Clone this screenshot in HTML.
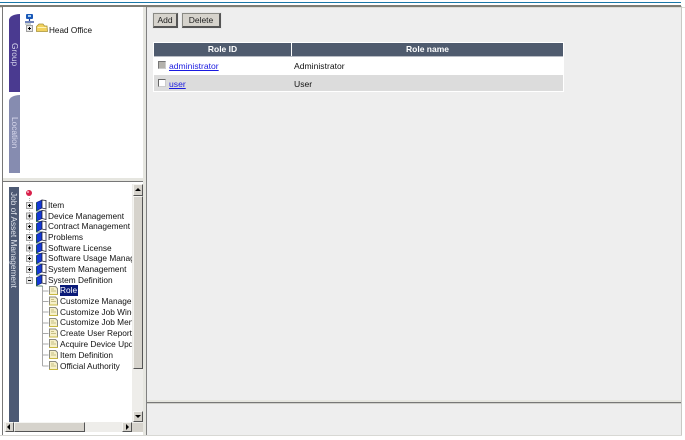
<!DOCTYPE html>
<html><head><meta charset="utf-8">
<style>
html,body{margin:0;padding:0;width:685px;height:440px;overflow:hidden;background:#fff}
body{position:relative;font-family:"Liberation Sans",sans-serif;font-size:8.3px;color:#111;filter:blur(.3px)}
.a{position:absolute}
.t{position:absolute;white-space:nowrap;line-height:11px;height:11px}
.v{position:absolute;writing-mode:vertical-rl;white-space:nowrap;font-size:8.3px}
.btn{position:absolute;background:#d6d3cc;border-style:solid;border-width:1px 2px 2px 1px;border-color:#8a8a84 #555 #555 #8a8a84;box-shadow:0 0 0 1px #e8e8e8;box-sizing:border-box;font-size:8.5px;text-align:center;line-height:13px;color:#222}
.sb{position:absolute;background:#d6d3cc;border:1px solid;border-color:#f5f5f2 #555 #555 #f5f5f2;box-sizing:border-box}
svg.i{position:absolute;overflow:visible}
</style></head><body>
<div class="a" style="left:0;top:2px;width:681px;height:1px;background:#1a78a8"></div>
<div class="a" style="left:0;top:5px;width:681px;height:2px;background:#7c7c74"></div>
<div class="a" style="left:0;top:7px;width:685px;height:1px;background:#dcdcd6"></div>
<div class="a" style="left:2px;top:6px;width:1px;height:430px;background:#777"></div>
<div class="a" style="left:3px;top:7px;width:140px;height:171px;background:#fff"></div>
<div class="a" style="left:143px;top:7px;width:4px;height:429px;background:#e6e6e0"></div>
<div class="a" style="left:146px;top:7px;width:1px;height:429px;background:#808080"></div>
<div class="a" style="left:147px;top:8px;width:534px;height:392px;background:#eee"></div>
<div class="a" style="left:681px;top:6px;width:1px;height:430px;background:#c8c8c4"></div>
<div class="a" style="left:147px;top:400px;width:534px;height:2px;background:#e6e6e0"></div>
<div class="a" style="left:147px;top:402px;width:534px;height:1px;background:#777"></div>
<div class="a" style="left:147px;top:403px;width:534px;height:1px;background:#cfcfca"></div>
<div class="a" style="left:147px;top:404px;width:534px;height:31px;background:#eee"></div>
<div class="a" style="left:0;top:435px;width:682px;height:1px;background:#d8d8d4"></div>

<div class="a" style="left:3px;top:178px;width:140px;height:3px;background:#e6e6e0"></div>
<div class="a" style="left:3px;top:181px;width:140px;height:1px;background:#777"></div>
<div class="a" style="left:3px;top:182px;width:140px;height:253px;background:#fff"></div>

<div class="a" style="left:9px;top:14px;width:11px;height:78px;background:#4a3a90;border-radius:11px 0 0 0/6px 0 0 0"></div>
<div class="v" style="left:9px;top:43px;width:11px;line-height:11px;color:#d8d8ec">Group</div>
<div class="a" style="left:9px;top:95px;width:11px;height:78px;background:#868cb0;border-radius:11px 0 0 0/6px 0 0 0"></div>
<div class="v" style="left:9px;top:117px;width:11px;line-height:11px;color:#d8d8ec">Location</div>
<div class="a" style="left:9px;top:187px;width:10px;height:235px;background:#4d5a74"></div>
<div class="v" style="left:9px;top:192px;width:10px;line-height:10px;color:#e0e4ec">Job of Asset Management</div>

<svg width="0" height="0" style="position:absolute"><defs>
<g id="plus"><rect x=".5" y=".5" width="6" height="6" fill="#e8e8e8" stroke="#a0a0a0"/><path d="M2 3.500h3M3.500 2v3" stroke="#000"/></g>
<g id="minus"><rect x=".5" y=".5" width="6" height="6" fill="#e8e8e8" stroke="#a0a0a0"/><path d="M2 3.500h3" stroke="#000"/></g>
<g id="book"><path d="M.5 3 6 .5v8l-5.500 2.500z" fill="#1438d8" stroke="#0a1a70" stroke-width=".6"/><path d="M6 .5 10 1v8.500L6 8.500z" fill="#fff" stroke="#223" stroke-width=".8"/><path d="M.5 3.500v8h6" fill="none" stroke="#1a5a40" stroke-width=".8"/></g>
<g id="doc"><path d="M.5.5h6l2 2v6h-8z" fill="#f6f0c8" stroke="#8a8a80"/><path d="M2 3h3M2 5h5" stroke="#b8b070" stroke-width=".8"/><path d="M0 8.500h9" stroke="#c8b840"/></g>
</defs></svg>

<svg class="i" style="left:24px;top:13px" width="12" height="12"><rect x="2" y="1" width="7" height="5" rx="1" fill="#1a58b8"/><rect x="4" y="2" width="3" height="2" fill="#a8d0f0"/><path d="M5.500 6v2M1 9h9" stroke="#1a3a90" stroke-width="1.200"/><path d="M1 11h6" stroke="#9aa" stroke-width="1"/></svg>
<svg class="i" style="left:26px;top:25px" width="8" height="8"><use href="#plus"/></svg>
<svg class="i" style="left:36px;top:23px" width="12" height="10"><path d="M.5 3.500 3 1h4l1.500 2h2.500l.5 5.500h-11z" fill="#f2d25e" stroke="#a89238" stroke-width=".8"/><path d="M1.500 4.500h9" stroke="#fff4b8"/></svg>
<div class="t" style="left:49px;top:25px;font-size:8.2px">Head Office</div>

<svg class="i" style="left:25px;top:189px" width="8" height="8"><circle cx="4" cy="4" r="3" fill="#d8204a"/><circle cx="3" cy="3" r="1" fill="#f8b0c0"/></svg>

<svg class="i" style="left:0;top:190px" width="60" height="190">
<path d="M29.500 8V90" stroke="#b0b0b0" stroke-dasharray="1 1"/>
<path d="M42.500 96V176M42.500 101h6M42.500 111.500h6M42.500 122h6M42.500 133h6M42.500 143.500h6M42.500 154h6M42.500 165h6M42.500 176h6" stroke="#a8a8a8" fill="none"/>
<use href="#plus" x="26" y="12"/><use href="#plus" x="26" y="22.500"/><use href="#plus" x="26" y="33"/><use href="#plus" x="26" y="44"/><use href="#plus" x="26" y="54.500"/><use href="#plus" x="26" y="65"/><use href="#plus" x="26" y="76"/><use href="#minus" x="26" y="87"/>
<use href="#book" x="36" y="9.500"/><use href="#book" x="36" y="20"/><use href="#book" x="36" y="30.500"/><use href="#book" x="36" y="41.500"/><use href="#book" x="36" y="52"/><use href="#book" x="36" y="62.500"/><use href="#book" x="36" y="73.500"/><use href="#book" x="36" y="84.500"/>
<use href="#doc" x="49" y="96"/><use href="#doc" x="49" y="106.500"/><use href="#doc" x="49" y="117"/><use href="#doc" x="49" y="128"/><use href="#doc" x="49" y="138.500"/><use href="#doc" x="49" y="149"/><use href="#doc" x="49" y="160"/><use href="#doc" x="49" y="171"/>
</svg>

<div class="a" style="left:0;top:184px;width:132px;height:238px;overflow:hidden">
<div class="t" style="left:48px;top:16px">Item</div>
<div class="t" style="left:48px;top:27px">Device Management</div>
<div class="t" style="left:48px;top:37px">Contract Management</div>
<div class="t" style="left:48px;top:48px">Problems</div>
<div class="t" style="left:48px;top:59px">Software License</div>
<div class="t" style="left:48px;top:69px">Software Usage Management</div>
<div class="t" style="left:48px;top:80px">System Management</div>
<div class="t" style="left:48px;top:91px">System Definition</div>
<div class="t" style="left:60px;top:101px;background:#0a1a78;color:#fff;width:18px;">Role</div>
<div class="t" style="left:60px;top:112px">Customize Management</div>
<div class="t" style="left:60px;top:123px">Customize Job Window</div>
<div class="t" style="left:60px;top:133px">Customize Job Menu</div>
<div class="t" style="left:60px;top:144px">Create User Report</div>
<div class="t" style="left:60px;top:155px">Acquire Device Update</div>
<div class="t" style="left:60px;top:166px">Item Definition</div>
<div class="t" style="left:60px;top:177px">Official Authority</div>
</div>

<div class="a" style="left:132px;top:184px;width:11px;height:238px;background:#eeedea"></div>
<div class="sb" style="left:133px;top:184px;width:10px;height:12px"></div>
<div class="a" style="left:135px;top:188px;width:0;height:0;border:3px solid transparent;border-top:0;border-bottom:3px solid #000"></div>
<div class="sb" style="left:133px;top:196px;width:10px;height:173px"></div>
<div class="sb" style="left:133px;top:411px;width:10px;height:11px"></div>
<div class="a" style="left:135px;top:415px;width:0;height:0;border:3px solid transparent;border-bottom:0;border-top:3px solid #000"></div>
<div class="a" style="left:4px;top:422px;width:139px;height:10px;background:#eeedea"></div>
<div class="sb" style="left:5px;top:422px;width:9px;height:10px"></div>
<div class="a" style="left:7px;top:424px;width:0;height:0;border:3px solid transparent;border-left:0;border-right:3px solid #000"></div>
<div class="sb" style="left:14px;top:422px;width:71px;height:10px"></div>
<div class="sb" style="left:122px;top:422px;width:10px;height:10px"></div>
<div class="a" style="left:126px;top:424px;width:0;height:0;border:3px solid transparent;border-right:0;border-left:3px solid #000"></div>
<div class="a" style="left:132px;top:423px;width:11px;height:9px;background:#d6d3cc"></div>

<div class="btn" style="left:153px;top:13px;width:25px;height:15px">Add</div>
<div class="btn" style="left:182px;top:13px;width:39px;height:15px">Delete</div>

<div class="a" style="left:153px;top:42px;width:411px;height:50px;background:#fff"></div>
<div class="a" style="left:154px;top:43px;width:137px;height:13px;background:#4f5b6e;color:#fff;font-weight:bold;font-size:8.5px;line-height:13px;text-align:center">Role ID</div>
<div class="a" style="left:292px;top:43px;width:271px;height:13px;background:#4f5b6e;color:#fff;font-weight:bold;font-size:8.5px;line-height:13px;text-align:center">Role name</div>
<div class="a" style="left:154px;top:56px;width:409px;height:1px;background:#b8bcc4"></div>
<div class="a" style="left:154px;top:75px;width:409px;height:16px;background:#dcdcdc"></div>
<div class="a" style="left:158px;top:61px;width:8px;height:8px;background:#b4b2ac;border:1px solid;border-color:#777 #ccc #ccc #777;box-sizing:border-box"></div>
<div class="a" style="left:158px;top:79px;width:8px;height:8px;background:#fff;border:1px solid;border-color:#666 #ccc #ccc #666;box-sizing:border-box"></div>
<div class="t" style="left:169px;top:61px;font-size:8.6px;color:#1a1ae0;text-decoration:underline">administrator</div>
<div class="t" style="left:169px;top:79px;font-size:8.6px;color:#1a1ae0;text-decoration:underline">user</div>
<div class="t" style="left:294px;top:61px;font-size:8.6px">Administrator</div>
<div class="t" style="left:294px;top:79px;font-size:8.6px">User</div>
</body></html>
